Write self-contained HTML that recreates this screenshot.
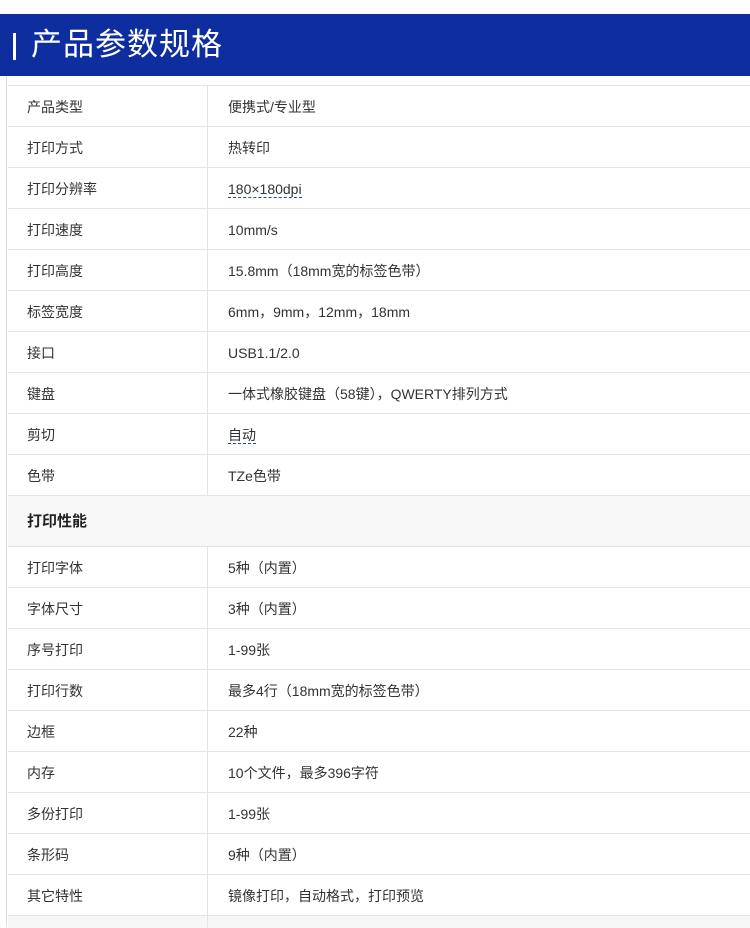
<!DOCTYPE html>
<html><head><meta charset="utf-8"><style>
body{margin:0;width:750px;height:926px;overflow:hidden;background:#fff;font-family:"Liberation Sans","Noto Sans CJK SC",sans-serif;}
.hd{position:absolute;top:14px;left:0;width:750px;height:62px;background:#0e2ea0;color:#fff;}
.hd .bar{position:absolute;left:13px;top:19px;width:3px;height:27px;background:#fff;}
.hd .t{position:absolute;left:31px;top:11px;font-size:31px;line-height:40px;letter-spacing:1px;}
.lb{position:absolute;left:6px;top:76px;width:1px;height:850px;background:#ddd;}
.tb{position:absolute;left:8px;top:85px;width:742px;border-top:1px solid #e4e4e4;}
.r{height:40px;border-bottom:1px solid #e4e4e4;position:relative;font-size:14px;color:#333;}
.r .a{position:absolute;left:19px;top:1px;line-height:40px;}
.r .b{position:absolute;left:199px;top:0;height:40px;border-left:1px solid #e4e4e4;}
.r .v{position:absolute;left:220px;top:1px;line-height:40px;}
.s{height:50px;border-bottom:1px solid #e4e4e4;background:#f8f8f8;font-size:15px;font-weight:bold;color:#222;line-height:52px;padding-left:19px;}
.u{border-bottom:1px dashed #2540b0;}
.end{height:12px;background:#f7f7f7;position:relative;}
</style></head><body>
<div class="hd"><div class="bar"></div><div class="t">产品参数规格</div></div>
<div class="lb"></div>
<div class="tb">
<div class="r"><span class="a">产品类型</span><i class="b"></i><span class="v">便携式/专业型</span></div>
<div class="r"><span class="a">打印方式</span><i class="b"></i><span class="v">热转印</span></div>
<div class="r"><span class="a">打印分辨率</span><i class="b"></i><span class="v"><span class="u">180×180dpi</span></span></div>
<div class="r"><span class="a">打印速度</span><i class="b"></i><span class="v">10mm/s</span></div>
<div class="r"><span class="a">打印高度</span><i class="b"></i><span class="v">15.8mm（18mm宽的标签色带）</span></div>
<div class="r"><span class="a">标签宽度</span><i class="b"></i><span class="v">6mm，9mm，12mm，18mm</span></div>
<div class="r"><span class="a">接口</span><i class="b"></i><span class="v">USB1.1/2.0</span></div>
<div class="r"><span class="a">键盘</span><i class="b"></i><span class="v">一体式橡胶键盘（58键），QWERTY排列方式</span></div>
<div class="r"><span class="a">剪切</span><i class="b"></i><span class="v"><span class="u">自动</span></span></div>
<div class="r"><span class="a">色带</span><i class="b"></i><span class="v">TZe色带</span></div>
<div class="s">打印性能</div>
<div class="r"><span class="a">打印字体</span><i class="b"></i><span class="v">5种（内置）</span></div>
<div class="r"><span class="a">字体尺寸</span><i class="b"></i><span class="v">3种（内置）</span></div>
<div class="r"><span class="a">序号打印</span><i class="b"></i><span class="v">1-99张</span></div>
<div class="r"><span class="a">打印行数</span><i class="b"></i><span class="v">最多4行（18mm宽的标签色带）</span></div>
<div class="r"><span class="a">边框</span><i class="b"></i><span class="v">22种</span></div>
<div class="r"><span class="a">内存</span><i class="b"></i><span class="v">10个文件，最多396字符</span></div>
<div class="r"><span class="a">多份打印</span><i class="b"></i><span class="v">1-99张</span></div>
<div class="r"><span class="a">条形码</span><i class="b"></i><span class="v">9种（内置）</span></div>
<div class="r"><span class="a">其它特性</span><i class="b"></i><span class="v">镜像打印，自动格式，打印预览</span></div>
<div class="end"><i style="position:absolute;left:199px;top:0;height:12px;border-left:1px solid #e4e4e4"></i></div>
</div>
</body></html>
